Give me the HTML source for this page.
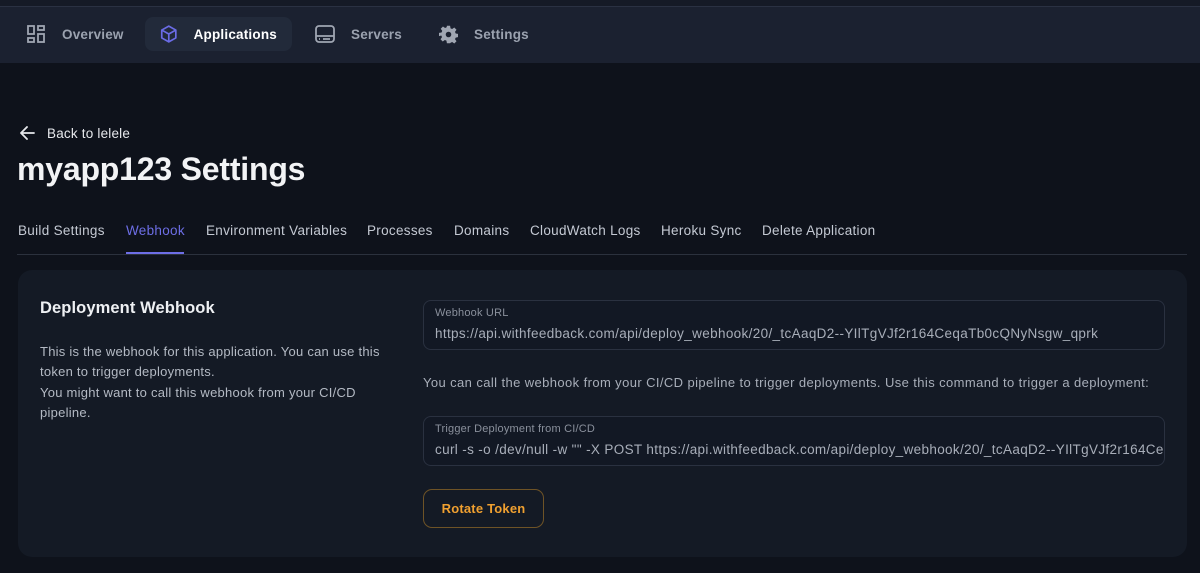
<!DOCTYPE html>
<html><head><style>
body{margin:0;width:1200px;height:573px;background:#0e121b;font-family:"Liberation Sans",sans-serif;overflow:hidden;position:relative;color:#c9ced8}
.nav{position:absolute;left:0;top:0;width:1200px;height:63px;background:#1b2130;border-top:6px solid #151a26;box-sizing:border-box}
.nav .line{position:absolute;top:0;left:0;right:0;height:1px;background:#2a3142}
.ni{position:absolute;top:11px;height:34px;display:flex;align-items:center;font-size:13.5px;font-weight:bold;color:#9ba2af;letter-spacing:0.2px}
.ni svg{margin-right:16px}
.act{background:#222a3a;border-radius:8px;color:#fff;padding:0 15px}
.abs{position:absolute}
.tabs span{position:absolute;top:223px;font-size:13.5px;color:#c4c9d3;letter-spacing:0.3px}
.card{position:absolute;left:18px;top:270px;width:1169px;height:287px;background:#141a25;border-radius:14px}
.inp{position:absolute;left:423px;width:742px;height:50px;border:1px solid #2a3140;border-radius:8px;background:#121824;box-sizing:border-box;overflow:hidden;white-space:nowrap}
.inp .l{position:absolute;left:11px;top:6px;font-size:11px;color:#8a909c;letter-spacing:0.2px}
.inp .v{position:absolute;left:11px;top:25px;font-size:13.5px;color:#a8aeb9;letter-spacing:0.35px}
</style></head><body>
<div class="nav"><div class="line"></div>
<div class="ni" style="left:27px"><svg width="19" height="19" viewBox="0 0 19 19" fill="none" stroke="#a0a6b2" stroke-width="1.8"><rect x="1" y="1" width="6" height="8"/><rect x="11" y="1" width="6" height="4"/><rect x="1" y="13" width="6" height="4"/><rect x="11" y="9" width="6" height="8"/></svg>Overview</div>
<div class="ni act" style="left:145px;width:117px"><svg width="22" height="24" viewBox="0 0 20 22" fill="none" stroke="#6b6ce6" stroke-width="1.9" stroke-linejoin="round"><path d="M10 2L18 6.5V15.5L10 20L2 15.5V6.5Z"/><path d="M2 6.5L10 11L18 6.5M10 11V20"/></svg>Applications</div>
<div class="ni" style="left:315px"><svg width="20" height="19" viewBox="0 0 20 19" fill="none" stroke="#a0a6b2" stroke-width="1.8"><rect x="1" y="1" width="18" height="16" rx="3"/><path d="M1 11H19M4 14H5M8 14H15"/></svg>Servers</div>
<div class="ni" style="left:439px"><svg width="19" height="19" viewBox="0 0 24 24"><path fill="#a0a6b2" d="M10 1h4l.6 3.2 2 .9 2.7-1.9 2.8 2.8-1.9 2.7.9 2 3.2.6v4l-3.2.6-.9 2 1.9 2.7-2.8 2.8-2.7-1.9-2 .9L14 23h-4l-.6-3.2-2-.9-2.7 1.9-2.8-2.8 1.9-2.7-.9-2L0 14v-4l3.2-.6.9-2L2.2 4.7 5 1.9l2.7 1.9 2-.9z"/><circle cx="12" cy="12" r="3.5" fill="#1b2130"/></svg>Settings</div>
</div>
<div class="abs" style="left:19px;top:125px;font-size:13.5px;color:#e6e8ec;display:flex;align-items:center;letter-spacing:0.2px"><svg width="16" height="16" viewBox="0 0 16 16" fill="none" stroke="#e6e8ec" stroke-width="1.8" stroke-linecap="round" stroke-linejoin="round" style="margin-right:12px"><path d="M15 8H2M8 2L2 8l6 6"/></svg>Back to lelele</div>
<div class="abs" style="left:17px;top:151px;font-size:32px;font-weight:bold;color:#f2f3f5;letter-spacing:-0.2px">myapp123 Settings</div>
<div class="tabs">
<span style="left:18px">Build Settings</span>
<span style="left:126px;color:#6d6ee6">Webhook</span>
<span style="left:206px">Environment Variables</span>
<span style="left:367px">Processes</span>
<span style="left:454px">Domains</span>
<span style="left:530px">CloudWatch Logs</span>
<span style="left:661px">Heroku Sync</span>
<span style="left:762px">Delete Application</span>
</div>
<div class="abs" style="left:17px;top:254px;width:1170px;height:1px;background:#2b313d"></div>
<div class="abs" style="left:126px;top:252px;width:58px;height:2px;background:#6d6ee6"></div>
<div class="card"></div>
<div class="abs" style="left:40px;top:299px;font-size:16.5px;font-weight:bold;color:#eef0f3;letter-spacing:0.1px">Deployment Webhook</div>
<div class="abs" style="left:40px;top:342px;width:355px;font-size:13px;line-height:20.3px;color:#b4bac4;letter-spacing:0.25px">This is the webhook for this application. You can use this token to trigger deployments.<br>You might want to call this webhook from your CI/CD pipeline.</div>
<div class="inp" style="top:300px"><div class="l">Webhook URL</div><div class="v">https://api.withfeedback.com/api/deploy_webhook/20/_tcAaqD2--YIlTgVJf2r164CeqaTb0cQNyNsgw_qprk</div></div>
<div class="abs" style="left:423px;top:375px;font-size:13px;color:#a8aeb9;letter-spacing:0.4px;white-space:nowrap">You can call the webhook from your CI/CD pipeline to trigger deployments. Use this command to trigger a deployment:</div>
<div class="inp" style="top:416px"><div class="l">Trigger Deployment from CI/CD</div><div class="v">curl -s -o /dev/null -w "" -X POST https://api.withfeedback.com/api/deploy_webhook/20/_tcAaqD2--YIlTgVJf2r164CeqaTb0cQNyNsgw_qprk</div></div>
<div class="abs" style="left:423px;top:489px;width:121px;height:39px;border:1px solid #6e5326;border-radius:9px;box-sizing:border-box;display:flex;align-items:center;justify-content:center;font-size:13px;font-weight:bold;color:#f0a030;letter-spacing:0.2px">Rotate Token</div>
</body></html>
